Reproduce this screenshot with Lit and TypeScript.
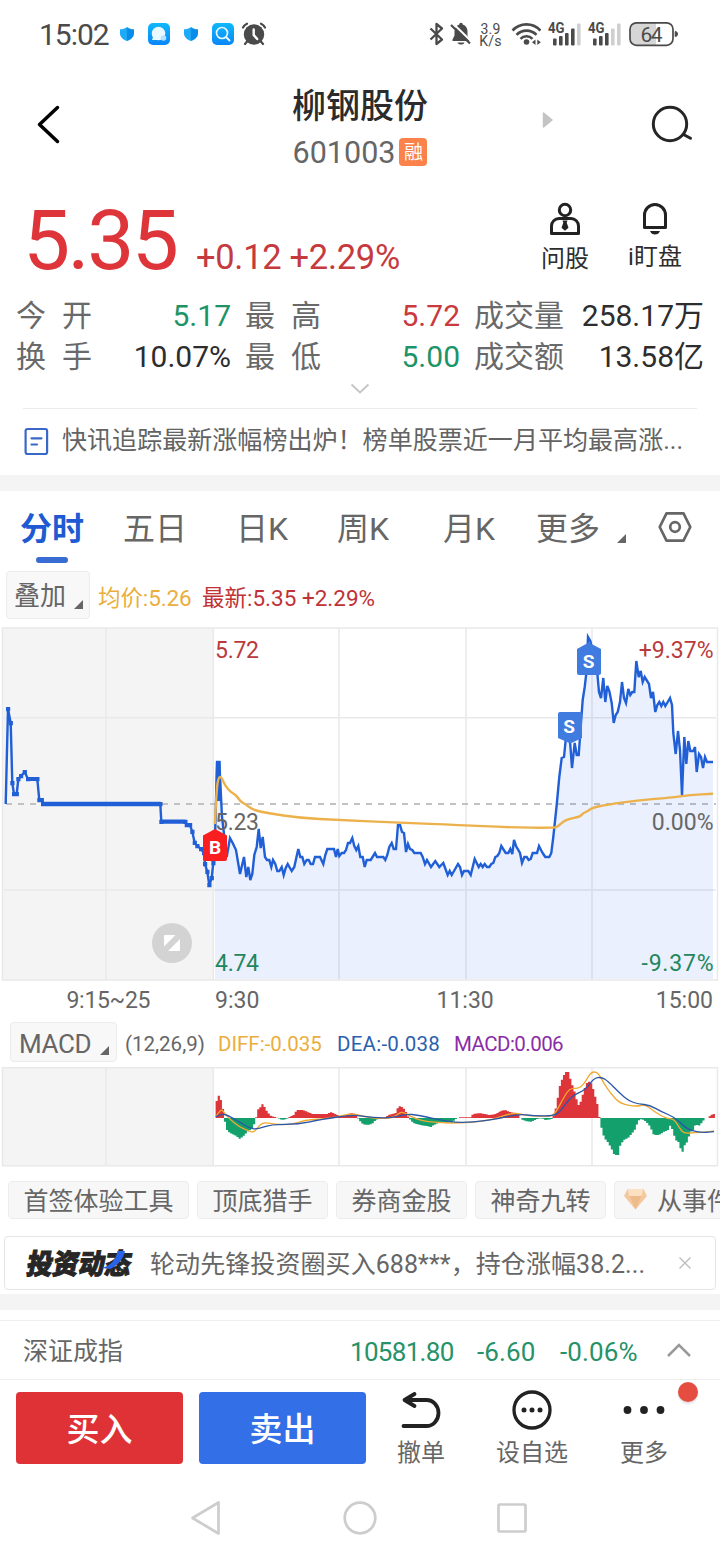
import { LitElement, html, svg, css } from "lit";
import { customElement } from "lit/decorators.js";

type Pt = [number, number];

const line = (pts: Pt[]) => "M" + pts.map((p) => p.join(" ")).join("L");

/** Smooth path through the points, using midpoints as curve ends. */
const smooth = (pts: Pt[]) => {
  let d = `M${pts[0].join(" ")}`;
  for (let i = 1; i < pts.length - 1; i++) {
    const mx = (pts[i][0] + pts[i + 1][0]) / 2;
    const my = (pts[i][1] + pts[i + 1][1]) / 2;
    d += `Q${pts[i].join(" ")} ${mx} ${my}`;
  }
  return d + `L${pts[pts.length - 1].join(" ")}`;
};

/* Call auction, 9:15 to 9:25 */
const AUCTION: Pt[] = [
  [8, 709], [10.7, 723], [12.3, 783], [14, 794], [16.7, 794], [18.3, 779], [21, 776], [24.7, 772], [28, 779],
  [37.3, 779], [39.3, 800], [41.7, 800], [43, 804], [160.3, 804], [161.3, 821.7], [185.3, 821.7], [186.7, 825],
  [190, 825], [192.3, 831.7], [194.7, 842.7], [197.3, 846], [201, 849], [204, 853], [205, 864], [207.3, 871.7],
  [209.3, 885], [211.7, 878], [213.3, 863],
];

/* Continuous trading */
const PRICE: Pt[] = [
  [214.7, 850], [217, 762], [219.3, 762], [222, 817], [226.7, 857], [230, 838], [232.7, 843], [236, 850], [240, 874],
  [244, 857], [246.3, 877], [248.3, 867], [250.3, 880], [252.3, 874], [254.3, 855], [256.7, 847], [258.7, 829],
  [260.7, 848], [262.7, 837], [265, 857], [267, 860], [269.3, 860], [271.3, 867], [273, 860], [275.3, 864],
  [277.3, 871], [279.3, 871], [281.7, 867], [283.7, 875], [285.7, 868], [287.7, 864], [291.7, 871], [294.3, 867],
  [296.7, 856], [298.3, 849], [300.3, 857], [302.3, 857], [304.3, 864], [306.7, 860], [308.7, 860], [310.7, 864],
  [313, 864], [315, 857], [320, 857], [323.3, 864], [325.3, 855], [327.3, 849], [334, 849], [336, 857], [337.7, 849],
  [339.3, 856], [341.7, 853], [344, 853], [346, 850], [348, 843], [350, 843], [352.3, 838], [354.3, 846],
  [356.3, 850], [358.3, 846], [360.3, 857], [362.7, 857], [364.7, 867], [366.7, 860], [370.7, 860], [375, 853],
  [377, 857], [383.3, 857], [385.3, 860], [387.3, 855], [389.3, 847], [391.7, 843], [393.7, 849], [396, 849],
  [398, 825], [400, 825], [402, 832], [404, 833], [406, 852], [408, 844], [410, 849], [412.3, 850], [414.3, 853],
  [420.7, 853], [422.7, 857], [425, 864], [427, 860], [431, 867], [435.3, 861], [439.3, 867], [443.3, 863],
  [447.7, 875], [449.7, 871], [451.7, 875], [454, 871], [458, 864], [460, 867], [462, 875], [464, 871], [468.3, 871],
  [470.7, 875], [472.7, 867], [474.7, 859], [478.7, 867], [480.7, 864], [482.7, 867], [484.7, 864], [487, 867],
  [489.3, 867], [491.3, 864], [493.3, 863], [495.3, 857], [497.3, 856], [499.3, 853], [501.3, 846], [505.7, 853],
  [508.3, 853], [510.3, 849], [512.3, 854], [514, 840], [516, 846], [520, 853], [522, 863], [524.3, 857],
  [526.7, 857], [528.7, 860], [530.7, 859], [532.7, 853], [537, 853], [539, 846], [541, 850], [543.3, 854],
  [545.3, 857], [549.3, 857], [551.3, 853], [553.3, 837], [556.7, 805], [559.3, 777], [561.7, 758], [564, 757],
  [565.7, 740], [568.5, 730], [570.3, 745], [572, 768], [574.7, 743], [576.7, 755], [578.7, 755], [580.7, 727],
  [582.7, 700], [584.7, 687], [586.7, 670], [588, 637], [590.3, 641], [597.3, 673], [599, 692], [601, 698],
  [603.3, 678], [605.3, 702], [607.3, 686], [609.3, 691], [611.7, 703], [613.7, 723], [615.7, 715], [617.7, 712],
  [620, 702], [622, 682], [624, 698], [626, 703], [628.3, 689], [630.3, 695], [632.3, 692], [634.3, 692],
  [636.3, 661], [638.7, 677], [640.7, 671], [642.7, 682], [644.7, 677], [649, 684], [651, 698], [653, 692],
  [655.3, 712], [657.3, 705], [659.3, 702], [661.3, 706], [663.3, 702], [665.3, 706], [667.7, 702], [670, 698],
  [672, 705], [673.3, 733], [675.7, 754], [678, 731], [680, 750], [682, 795], [684.3, 737], [686.3, 764],
  [688.3, 741], [690.3, 751], [693.3, 751], [695, 747], [696.7, 772], [699, 754], [701, 757], [703, 768],
  [705, 757], [707, 762], [713, 762],
];

const AVERAGE: Pt[] = [
  [214.9, 824], [216.5, 789], [218.7, 777], [221.3, 777], [225.3, 786], [230.7, 792], [236, 795], [240, 801],
  [245, 804], [253.3, 810], [266.7, 813], [300, 818], [339, 820], [400, 822.7], [460, 825], [506.7, 827.3],
  [555, 828], [558.3, 826], [563, 821.7], [568.3, 819], [580, 816.7], [583.3, 813], [588.3, 811], [592, 807.7],
  [606.7, 804.7], [640, 800], [670, 797.7], [690, 795], [713, 793.7],
];

/* Histogram outline: x position and signed height */
const HIST: Pt[] = [
  [215.8, 15], [219, 23], [221.8, 15], [223.6, 5], [224.5, 0], [225, -4], [227.3, -13], [231.9, -16], [236.5, -18],
  [239.7, -21], [243.4, -18], [248, -13], [251.6, -11], [254.8, -5], [256.2, 1], [257.1, 8], [259.9, 10],
  [262.2, 14], [264.5, 11], [267.2, 6], [270.9, 2], [274.6, 1], [278, 0], [282.4, -2], [286.5, -1], [289.3, 1],
  [293.9, 3], [296.6, 8], [303, 8], [307.6, 6], [312.2, 4], [327, 4], [330.6, 6], [335.2, 4], [339, 2], [344.4, 2],
  [351.2, 5], [354.5, 4], [357.2, 1], [359, -2], [362.7, -6], [367.3, -7], [372, -6], [375.6, -2], [379, -0.6],
  [385.7, 0.6], [388.4, 3], [392.6, 4], [395.8, 5], [398.5, 12], [402.2, 11], [405, 8], [407.7, 2], [409.6, -1],
  [413.2, -5], [420, -7], [427, -8], [430.7, -9], [434, -7], [438.5, -5], [447.7, -5], [452.3, -4], [456, -1],
  [459, 0.7], [470.6, 0.7], [473, 4], [479.8, 5], [489, 3], [496, 4], [500.5, 7], [505, 8], [509.7, 6],
  [515.2, 5], [518.9, 3], [520.7, -1], [525.7, -3], [530.3, -4], [535, -2], [538, -0.6], [542.7, -0.6],
  [545.5, -2], [551, -1.5], [553.3, 1], [555.6, 9], [557.4, 18], [559.3, 30], [561, 36], [563.4, 42], [565.7, 46],
  [568.5, 46], [570.8, 37], [574, 28], [576.7, 18], [579, 12], [581.3, 18], [584, 28], [586.8, 35], [590, 37],
  [592.3, 32], [595, 22], [597.9, 12], [599.2, 2], [600.6, -6], [602.4, -14], [604.3, -20], [607, -23],
  [610.7, -29], [614.4, -37], [618.5, -37], [620, -28], [623.6, -22], [628.1, -20], [631.3, -16], [634.6, -12],
  [638.2, -3], [640, -1], [642.8, -1.5], [646.5, -4], [649.7, -8], [653.8, -17], [659, -17], [663.5, -14],
  [668, -12], [670.4, -7], [673, -13], [675.4, -22], [678.6, -24], [681, -32], [682.8, -34], [685, -26],
  [687.4, -24], [690, -14], [693.3, -12], [695.6, -6], [698.8, -8], [702.5, -4], [704.8, 0], [707.5, 0],
  [710, 2], [712.6, 4], [714.6, 4],
];

const HIST_STEP = 2.08;
const bars = (positive: boolean) => {
  let d = "";
  let k = 0;
  for (let x = 215.6; x < 713.6; x += HIST_STEP) {
    const c = Math.min(x + HIST_STEP / 2, 714.5);
    while (k < HIST.length - 2 && HIST[k + 1][0] < c) k++;
    const [x0, y0] = HIST[k];
    const [x1, y1] = HIST[k + 1];
    const h = y0 + ((y1 - y0) * Math.max(0, c - x0)) / (x1 - x0);
    if (positive ? h > 0.3 : h < -0.3) {
      d += `M${x.toFixed(2)} 1118V${(1118 - h).toFixed(1)}h2.2V1118z`;
    }
  }
  return d;
};

/* Oscillator lines, on a 1568 x 480 sampling grid */
const DIFF: Pt[] = [
  [470, 305], [481, 281], [488, 292], [500, 312], [520, 335], [540, 347], [553, 353], [565, 330], [577, 322],
  [600, 328], [630, 330], [665, 315], [700, 312], [730, 307], [765, 295], [785, 302], [815, 310], [845, 310],
  [860, 305], [870, 293], [878, 291], [895, 305], [920, 318], [970, 325], [1030, 322], [1075, 313], [1100, 300],
  [1125, 293], [1145, 302], [1195, 305], [1208, 298], [1225, 255], [1240, 219], [1262, 221], [1275, 200],
  [1287, 171], [1302, 171], [1315, 205], [1330, 235], [1350, 266], [1385, 275], [1405, 268], [1425, 290],
  [1450, 310], [1468, 312], [1480, 340], [1490, 356], [1515, 352], [1535, 352], [1555, 348],
];
const DEA: Pt[] = [
  [470, 305], [483, 297], [495, 300], [520, 320], [545, 340], [560, 343], [590, 328], [650, 328], [700, 313],
  [770, 299], [800, 306], [850, 310], [885, 297], [910, 300], [980, 322], [1030, 322], [1090, 310], [1130, 297],
  [1160, 302], [1205, 303], [1220, 290], [1245, 242], [1275, 225], [1293, 190], [1310, 186], [1325, 200],
  [1350, 235], [1370, 258], [1390, 267], [1415, 270], [1440, 290], [1470, 307], [1490, 335], [1505, 347],
  [1530, 353], [1555, 350],
];

const STATS = [
  ["今开", "5.17", "down", "最高", "5.72", "up", "成交量", "258.17万"],
  ["换手", "10.07%", "", "最低", "5.00", "down", "成交额", "13.58亿"],
];

@customElement("status-bar")
class StatusBar extends LitElement {
  static styles = css`
    :host {
      display: flex;
      align-items: center;
      height: 68px;
      padding: 0 42px 0 39px;
      color: #4a4a4a;
      font-family: Roboto, "Noto Sans CJK SC", sans-serif;
    }
    .time {
      width: 77px;
      font-size: 30px;
      line-height: 68px;
      letter-spacing: -1px;
      padding-top: 2px;
    }
    svg { display: block; flex: none; }
    .right { margin-left: auto; display: flex; align-items: center; }
    .speed { display: flex; flex-direction: column; font-size: 14px; line-height: 12px; letter-spacing: 0.200px; text-align: center; width: 25px; margin: 0 8px 0 6px; padding-top: 2px; }
  `;
  signal(lit: number) {
    return svg`${[0, 1, 2, 3, 4].map(
      (i) => svg`<rect x=${5 + i * 6} y=${[16, 13.5, 10.5, 6, 1][i]} width="3.6" height=${[7, 9.5, 12.5, 17, 22][i]} rx="1" fill=${i < lit ? "#4a4a4a" : "#cfcfcf"}/>`
    )}`;
  }
  shield() {
    return svg`<path d="M7 0.5C9 2 11 2.8 14 2.8V7C14 10.500 11 13 7 14.500C3 13 0 10.500 0 7V2.800C3 2.800 5 2 7 .5z" fill="url(#sh)"/>`;
  }
  render() {
    return html`
      <div class="time">15:02</div>
      <svg width="152" height="26" viewBox="116 21 152 26">
        <defs>
          <linearGradient id="sh" x1="0" x2="1"><stop offset=".5" stop-color="#1fa9f7"/><stop offset=".5" stop-color="#078eea"/></linearGradient>
          <linearGradient id="sq" x1="0" y1="0" x2="0" y2="1"><stop stop-color="#10b8fb"/><stop offset="1" stop-color="#0a86f6"/></linearGradient>
        </defs>
        <g transform="translate(120 26.5)">${this.shield()}</g>
        <rect x="148" y="23" width="22" height="22" rx="5" fill="url(#sq)"/>
        <circle cx="158.500" cy="33.500" r="6.800" fill="#eaf8ff"/><path d="M153 37l-1 3h8z" fill="#eaf8ff"/>
        <circle cx="163.500" cy="38" r="2.800" fill="#b4e1ff"/>
        <g transform="translate(184 26.5)">${this.shield()}</g>
        <rect x="212" y="23" width="22" height="22" rx="5" fill="url(#sq)"/>
        <circle cx="222" cy="33" r="5.500" fill="none" stroke="#e6faff" stroke-width="1.700"/>
        <path d="M226 37l3.500 3.500" stroke="#e6faff" stroke-width="1.900" stroke-linecap="round"/>
        <g fill="none" stroke="#4a4a4a" stroke-width="2.200" stroke-linecap="round">
          <circle cx="254" cy="34.500" r="10.200" fill="#4a4a4a" stroke="none"/>
          <path d="M243 27.500a8 8 0 0 1 4-3.800M265 27.500a8 8 0 0 0-4-3.800M247.500 41l-2.500 3M260.500 41l2.500 3"/>
          <path d="M253.700 29.500v5.500l3.500 4" stroke="#fff" stroke-width="2.400"/>
        </g>
      </svg>
      <div class="right">
        <svg width="44" height="26" viewBox="428 21 44 26">
          <path d="M430.500 28.500L442 39.500L436.500 44V24L442 28.500L430.500 39.500" fill="none" stroke="#4a4a4a" stroke-width="2.300" stroke-linejoin="round"/>
          <path d="M461 22.800c1.300 0 1.500.8 1.700 1.600C466 25.500 467.500 28 467.500 31.500v4l2 4v1.500h-17v-1.500l2-4v-4c0-3.500 1.800-6 4.800-7.100.2-.8.400-1.600 1.700-1.600zM457.500 42.500h7c-1 2.700-6 2.700-7 0z" fill="#4a4a4a"/>
          <path d="M452.500 23l20 19.500" stroke="#fff" stroke-width="2"/><path d="M451 25l19 18.500" stroke="#4a4a4a" stroke-width="2.200"/>
        </svg>
        <div class="speed"><span>3.9</span><span>K/s</span></div>
        <svg width="30" height="26" viewBox="511 21 30 26">
          <g fill="none" stroke="#4a4a4a" stroke-width="2.600"><path d="M512.500 30.500a19 19 0 0 1 28 0M516.500 34.800a14 14 0 0 1 20 0M520.500 38.800a8.500 8.500 0 0 1 12 0"/></g>
          <circle cx="526.500" cy="42" r="2.800" fill="#4a4a4a"/>
          <path d="M535.500 39.500v5.500l-3.500-2.700zM537.300 39.500v5.500l3.500-2.700z" fill="#4a4a4a"/>
        </svg>
        <svg width="80" height="26" viewBox="0 -1.500 80 26">
          <text x="7" y="10.800" font-size="14.500" font-weight="700" fill="#4a4a4a" textLength="16.500" lengthAdjust="spacingAndGlyphs">4G</text>
          <g transform="translate(7)">${this.signal(4)}</g>
          <text x="47" y="10.800" font-size="14.500" font-weight="700" fill="#4a4a4a" textLength="16.500" lengthAdjust="spacingAndGlyphs">4G</text>
          <g transform="translate(47)">${this.signal(3)}</g>
        </svg>
        <svg width="57" height="26" viewBox="621 21 57 26">
          <path d="M636 23h20v22h-20a6 6 0 0 1-6-6V29a6 6 0 0 1 6-6z" fill="#d6d6d6"/>
          <rect x="630" y="22.800" width="43" height="22.500" rx="6.500" fill="none" stroke="#4a4a4a" stroke-width="1.700"/>
          <path d="M675.200 31.500q2.300 0 2.300 2.500t-2.300 2.500z" fill="#4a4a4a" stroke="#4a4a4a"/>
          <text x="640.500" y="41.500" font-size="21" fill="#4a4a4a" textLength="22">64</text>
        </svg>
      </div>`;
  }
}

@customElement("stock-header")
class StockHeader extends LitElement {
  static styles = css`
    :host {
      display: grid;
      grid-template-columns: 200px 1fr 200px;
      height: 112px;
      font-family: Roboto, "Noto Sans CJK SC", sans-serif;
    }
    .title { text-align: center; padding-top: 16px; }
    .name { font-size: 34px; line-height: 44px; color: #2b2b2b; font-weight: 500; }
    .code { display: flex; justify-content: center; align-items: center; gap: 4px; height: 49px; padding-top: 0; font-size: 30.500px; color: #666; }
    .tag { width: 28px; height: 28px; border-radius: 4px; background: #fb824a; color: #fff; font-size: 19px; line-height: 30px; text-align: center; margin-top: -2px; }
    svg { display: block; }
  `;
  render() {
    return html`
      <svg width="200" height="112" viewBox="0 68 200 112"><path d="M57.500 107.500L39.500 124.500L57.500 141.500" fill="none" stroke="#000" stroke-width="3.500" stroke-linecap="round" stroke-linejoin="round"/></svg>
      <div class="title">
        <div class="name">柳钢股份</div>
        <div class="code">601003<span class="tag">融</span></div>
      </div>
      <svg width="200" height="112" viewBox="520 68 200 112">
        <path d="M543.500 113v14l8.500-7z" fill="#c4c4c4" stroke="#c4c4c4" stroke-width="1.500" stroke-linejoin="round"/>
        <circle cx="670" cy="124" r="16.700" fill="none" stroke="#262626" stroke-width="3"/>
        <path d="M683.500 134.500l7 3.800" stroke="#262626" stroke-width="3" stroke-linecap="round"/>
      </svg>`;
  }
}

@customElement("quote-panel")
class QuotePanel extends LitElement {
  static styles = css`
    :host { display: block; color: #2d2d2d; font-family: Roboto, "Noto Sans CJK SC", sans-serif; }
    .top { display: flex; height: 115px; }
    .price { color: #dd3539; font-size: 84px; line-height: 121px; letter-spacing: -2.600px; padding-left: 23px; width: 173px; }
    .change { color: #c53a3e; font-size: 34.500px; line-height: 155px; letter-spacing: -0.300px; flex: 1; white-space: nowrap; }
    .tools { display: flex; padding: 21px 32px 0 0; }
    .tool { display: flex; flex-direction: column; align-items: center; width: 90px; font-size: 24px; line-height: 32px; }
    .tool svg { display: block; margin-bottom: 5px; }
    .tool.bell svg { margin-bottom: 3px; }
    .tool.bell { margin-right: -12px; }
    .stats { display: flex; flex-direction: column; padding: 0 16px; font-size: 30px; }
    .row { display: grid; grid-template-columns: 76px 139px 14px 76px 139px 14px 90px 1fr; line-height: 41px; white-space: nowrap; }
    .label { color: #696969; }
    .wide { display: flex; justify-content: space-between; }
    .value { text-align: right; }
    .third { grid-column: 7; }
    .up { color: #c9393d; }
    .down { color: #1d9467; }
    .more { display: flex; justify-content: center; height: 31px; padding-bottom: 5px; margin-bottom: -5px; align-items: center; box-sizing: border-box; height: 36px; margin-top: -5px; padding-top: 3px; margin-bottom: 0; }
    .news { display: flex; align-items: center; height: 66px; margin: 0 23px; border-top: 1px solid #ebebeb; font-size: 25px; line-height: 64px; color: #636363; white-space: nowrap; }
    .news svg { margin: 0 13px 2px 1px; }
    .news span { padding-bottom: 2px; letter-spacing: 0.050px; }
    .gap { height: 16px; background: #f4f4f4; }
  `;
  wide(t: string) {
    return html`<span class="label wide"><span>${t[0]}</span><span>${t[1]}</span></span>`;
  }
  render() {
    return html`
      <div class="top">
        <div class="price">5.35</div>
        <div class="change">+0.12 +2.29%</div>
        <div class="tools">
          <div class="tool">
            <svg width="34" height="37" viewBox="548 201 34 37" fill="none" stroke="#222" stroke-width="3">
              <circle cx="565" cy="210" r="5.700"/>
              <path d="M551.500 233.500V226a7.500 7.500 0 0 1 7.500-7.500h12a7.500 7.500 0 0 1 7.500 7.500v7.500z" stroke-linejoin="round"/>
              <path d="M562.500 220.500h5l-.8 2.300 1.800 5-3.500 3-3.500-3 1.800-5z" fill="#222" stroke="none"/>
            </svg>
            <span>问股</span>
          </div>
          <div class="tool bell">
            <svg width="34" height="37" viewBox="638 201 34 37">
              <path d="M644.500 227.500V215a10.500 10.500 0 0 1 21 0v12.500z" fill="none" stroke="#222" stroke-width="3" stroke-linejoin="round"/>
              <path d="M650 231h10c-1.500 4.800-8.500 4.800-10 0z" fill="#222"/>
            </svg>
            <span>i盯盘</span>
          </div>
        </div>
      </div>
      <div class="stats">
        ${STATS.map(
          (r) => html`<div class="row">
            ${this.wide(r[0])}<span class="value ${r[2]}">${r[1]}</span><i></i>
            ${this.wide(r[3])}<span class="value ${r[5]}">${r[4]}</span>
            <span class="label third">${r[6]}</span><span class="value">${r[7]}</span>
          </div>`
        )}
      </div>
      <div class="more"><svg width="20" height="12" viewBox="0 0 20 12"><path d="M1.500 1.500L10 9.500L18.500 1.500" fill="none" stroke="#c6c6c6" stroke-width="2"/></svg></div>
      <div class="news">
        <svg width="25" height="29" viewBox="24 427 25 29" fill="none" stroke="#3a68c9" stroke-width="2.200" stroke-linecap="round"><rect x="25.600" y="429" width="21.500" height="25" rx="2"/><path d="M31.500 438.300h10M31.500 444.500h5.500"/></svg>
        <span>快讯追踪最新涨幅榜出炉！榜单股票近一月平均最高涨...</span>
      </div>
      <div class="gap"></div>`;
  }
}

@customElement("price-chart")
class PriceChart extends LitElement {
  static styles = css`
    :host { display: block; font-family: Roboto, "Noto Sans CJK SC", sans-serif; color: #666; }
    svg { display: block; }
    .tabs { display: flex; height: 80px; font-size: 32px; line-height: 76px; white-space: nowrap; padding-left: 20px; }
    .tab { width: 113px; }
    .tab.day { width: 101px; }
    .tab.week { width: 106px; }
    .tab.month { width: 93px; }
    .active { color: #205ad3; font-weight: 700; width: 64px; margin-right: 39px; display: flex; flex-direction: column; align-items: center; }
    .active::after { content: ""; width: 32px; height: 6px; border-radius: 3px; background: #396cd2; margin-top: -10px; }
    .caret { border-left: 9px solid transparent; border-bottom: 9px solid #666; height: 0; align-self: flex-end; }
    .tabs .caret { margin: 0 31px 28px 17px; }
    .tabs svg { margin-top: 19px; }
    .legend { display: flex; align-items: center; height: 48px; padding-left: 6px; font-size: 22.500px; line-height: 48px; white-space: nowrap; margin-bottom: 1px; }
    .pick { display: flex; box-sizing: border-box; height: 48px; width: 84px; border: 1px solid #ececec; border-radius: 4px; background: #f8f8f8; font-size: 26px; line-height: 48px; padding-left: 7px; margin-right: 8px; }
    .pick .caret { margin: 0 0 9px 8px; }
    .avg { color: #eaae3c; width: 104px; padding-top: 6px; letter-spacing: -0.100px; }
    .last { color: #bf3236; padding-top: 6px; }
    .macdbar { display: flex; align-items: center; height: 40px; padding-left: 10px; font-size: 20.500px; white-space: nowrap; }
    .macdbar .pick { width: 107px; height: 40px; line-height: 42px; padding-left: 8px; margin-right: 8px; letter-spacing: -0.400px; }
    .macdbar .pick .caret { margin: 0 0 6px 9px; }
    .macdbar span { flex: none; padding-top: 3px; }
    .params { width: 93px; }
    .diff { width: 119px; color: #eaae3c; }
    .dea { width: 117px; color: #2b5fae; letter-spacing: 0.250px; }
    .macd { color: #8a2ca6; letter-spacing: -0.550px; }
    .label { font-size: 23px; fill: #666; }
    .label.up { fill: #b93a3d; }
    .label.down { fill: #22865f; }
    .mark { font-size: 19px; font-weight: 700; fill: #fff; }
    .stroke { fill: none; stroke: #205fd6; stroke-width: 2.400; }
    .avgline { fill: none; stroke: #ecb14a; stroke-width: 2.400; }
    .thin { fill: none; stroke-width: 1.300; }
  `;
  render() {
    const dots = AUCTION.map(([x, y]) => `M${x - 2} ${y - 2}h4.200v4.200h-4.200z`).join("");
    return html`
      <div class="tabs">
        <span class="active">分时</span><span class="tab">五日</span><span class="tab day">日K</span><span class="tab week">周K</span><span class="tab month">月K</span><span>更多</span>
        <i class="caret"></i>
        <svg width="36" height="34" viewBox="-18 -17 36 34" fill="none" stroke="#666" stroke-width="2.700" stroke-linejoin="round"><path d="M-8.500-13.700h17L15.300 0 8.500 13.700h-17L-15.300 0z"/><circle r="4.800"/></svg>
      </div>
      <div class="legend">
        <div class="pick">叠加<i class="caret"></i></div>
        <span class="avg">均价:5.26</span><span class="last">最新:5.35 +2.29%</span>
      </div>
      <svg width="720" height="402" viewBox="0 620 720 402">
        <rect x="2.500" y="628" width="211" height="352" fill="#f4f4f4"/>
        <g stroke="#e9e9e9" stroke-width="1.500" fill="none">
          <path d="M2.500 628H717.500V980H2.500zM4 717.800H716M4 890H716M106 628V980M213.300 628V980M339 628V980M466 628V980M592 628V980"/>
        </g>
        <path d="M6 804H716" stroke="#c2c2c2" stroke-width="1.800" stroke-dasharray="6 6"/>
        <path d="${line(PRICE)}V979H215z" fill="#2e6bfa" fill-opacity=".1"/>
        <path class="stroke" d="M5.700 804L${line(AUCTION).slice(1)}"/>
        <path d="${dots}M43 801.800H160.500V806.200H43zM161.300 819.600h24v4.200h-24zM28 777h9v4h-9z" fill="#205fd6"/>
        <path class="stroke" d=${line(PRICE)}/>
        <path d="M216 761h4.500l1 40h-6z" fill="#205fd6"/>
        <path class="avgline" d=${smooth(AVERAGE)}/>
        <text class="label up" x="215" y="658" textLength="44">5.72</text>
        <text class="label" x="215" y="829.800" textLength="44">5.23</text>
        <text class="label down" x="215" y="971" textLength="44">4.74</text>
        <text class="label up" x="713.500" y="658" text-anchor="end">+9.37%</text>
        <text class="label" x="713.500" y="829.800" text-anchor="end">0.00%</text>
        <text class="label down" x="713.500" y="971" text-anchor="end" textLength="72">-9.37%</text>
        <text class="label" x="66.500" y="1008" textLength="84">9:15~25</text>
        <text class="label" x="215" y="1008">9:30</text>
        <text class="label" x="436.500" y="1008">11:30</text>
        <text class="label" x="713" y="1008" text-anchor="end">15:00</text>
        <path d="M203 835.500l12-6.500 12 6.500v23.500q0 2-2 2h-20q-2 0-2-2z" fill="#f91f20"/>
        <text class="mark" x="215" y="854" text-anchor="middle">B</text>
        <path d="M577 649l11.800-6.500 12.200 6.500v24q0 2-2 2h-20q-2 0-2-2z" fill="#407be0"/>
        <text class="mark" x="588.500" y="668" text-anchor="middle">S</text>
        <path d="M558 714q0-2 2-2h20q2 0 2 2v24l-11.500 5.500-12.500-5.500z" fill="#407be0"/>
        <text class="mark" x="569" y="732.500" text-anchor="middle">S</text>
        <circle cx="172" cy="943" r="20" fill="#d3d3d3"/>
        <path d="M165 935h10.500L164 946.500V936q0-1 1-1zM180 939v11q0 1-1 1h-11z" fill="#fff"/>
      </svg>
      <div class="macdbar">
        <div class="pick">MACD<i class="caret"></i></div>
        <span class="params">(12,26,9)</span><span class="diff">DIFF:-0.035</span><span class="dea">DEA:-0.038</span><span class="macd">MACD:0.006</span>
      </div>
      <svg width="720" height="108" viewBox="0 1062 720 108">
        <rect x="2.500" y="1068" width="211" height="97.500" fill="#f4f4f4"/>
        <path d="M2.500 1067.800H717.500V1165.700H2.500zM106 1068V1165M213.300 1068V1165M339 1068V1165M466 1068V1165M592 1068V1165" stroke="#e9e9e9" stroke-width="1.500" fill="none"/>
        <path d=${bars(true)} fill="#dd3539"/>
        <path d=${bars(false)} fill="#14a06d"/>
        <g transform="translate(0 1015) scale(.45918 .33333)">
          <path class="thin" d=${smooth(DIFF)} stroke="#f0a92f" vector-effect="non-scaling-stroke"/>
          <path class="thin" d=${smooth(DEA)} stroke="#2a57a8" vector-effect="non-scaling-stroke"/>
        </g>
      </svg>`;
  }
}

@customElement("tool-strip")
class ToolStrip extends LitElement {
  static styles = css`
    :host { display: block; font-family: Roboto, "Noto Sans CJK SC", sans-serif; color: #666; }
    svg { display: block; flex: none; }
    .chips { display: flex; gap: 8px; padding: 11px 0 0 8px; overflow: hidden; font-size: 25px; }
    .chip { flex: none; box-sizing: border-box; height: 38px; width: 131px; display: flex; justify-content: center; align-items: center; line-height: 36px; padding-top: 3px; background: #f7f7f7; border: 1px solid #ededed; border-radius: 4px; white-space: nowrap; }
    .chip.long { width: 181px; }
    .chip svg { margin-right: 9px; margin-bottom: 6px; }
    .chip.gem { width: 190px; justify-content: flex-start; padding-left: 8px; }
    .feed { display: flex; align-items: center; box-sizing: border-box; height: 54px; margin: 17px 4px 4px; border: 1.500px solid #e5e5e5; border-radius: 4px; font-size: 25px; white-space: nowrap; padding-left: 18px; }
    .feed span { line-height: 50px; width: 528px; padding-top: 4px; letter-spacing: 0.080px; margin-left: -1px; }
    .gap { height: 16px; background: #f4f4f4; }
    .index { display: flex; align-items: center; box-sizing: border-box; height: 60px; margin-top: 10px; border: 1px solid #eee; border-width: 1px 0; padding-left: 23px; font-size: 25px; line-height: 60px; white-space: nowrap; }
    .index span { padding-top: 4px; }
    .index .num { color: #279268; font-size: 26px; letter-spacing: -0.700px; padding-top: 3px; }
    .name { width: 327px; }
    .a { width: 127px; }
    .b { width: 83px; }
    .c { width: 106px; }
    .index .b, .index .c { letter-spacing: 0.100px; }
    .logo { font-size: 28px; font-weight: 900; fill: #262626; stroke: #262626; stroke-width: 1; }
  `;
  render() {
    return html`
      <div class="chips">
        <div class="chip long">首签体验工具</div>
        <div class="chip">顶底猎手</div>
        <div class="chip">券商金股</div>
        <div class="chip">神奇九转</div>
        <div class="chip gem">
          <svg width="25" height="22" viewBox="0 0 25 22"><path d="M4.500 1h16L24 8 12.500 21.500 1 8z" fill="#f3c99f"/><path d="M4.500 1h16L18.500 8h-12z" fill="#fbe0c2"/><path d="M6.500 8h12l-6 13.500z" fill="#eebb8b"/></svg>
          从事件
        </div>
      </div>
      <div class="feed">
        <svg width="128" height="36" viewBox="0 0 128 36">
          <text class="logo" transform="translate(2.5 29) skewX(-10)" textLength="104" lengthAdjust="spacingAndGlyphs">投资动态</text>
          <path d="M79 23c8-2 14-8 15.500-17h7.500c-2 9-8 15-15 18z" fill="#2963e8"/>
        </svg>
        <span>轮动先锋投资圈买入688***，持仓涨幅38.2...</span>
        <svg width="14" height="14" viewBox="0 0 14 14"><path d="M1.500 1.500l11 11M12.500 1.500l-11 11" stroke="#bdbdbd" stroke-width="1.400"/></svg>
      </div>
      <div class="gap"></div>
      <div class="index">
        <span class="name">深证成指</span><span class="num a">10581.80</span><span class="num b">-6.60</span><span class="num c">-0.06%</span>
        <svg width="26" height="16" viewBox="0 0 26 16"><path d="M2 14L13 3L24 14" fill="none" stroke="#999" stroke-width="2.500"/></svg>
      </div>`;
  }
}

@customElement("trade-bar")
class TradeBar extends LitElement {
  static styles = css`
    :host { display: block; font-family: Roboto, "Noto Sans CJK SC", sans-serif; }
    svg { display: block; }
    .bar { display: flex; height: 96px; }
    .btn { width: 167px; height: 72px; margin: 12px 0 0 16px; border-radius: 4px; color: #fff; font-size: 33px; font-weight: 500; line-height: 76px; text-align: center; }
    .buy { background: #df3237; }
    .sell { background: #336fe6; }
    .act { position: relative; width: 112px; display: flex; flex-direction: column; align-items: center; font-size: 24px; line-height: 33px; color: #666; padding-top: 7px; }
    .act.undo { width: 110px; }
    .dot { position: absolute; top: 2px; right: 2px; width: 20px; height: 20px; border-radius: 50%; background: #e64d41; box-shadow: 0 2px 2px rgba(0, 0, 0, .12); }
    .sys { display: flex; height: 84px; justify-content: center; align-items: center; }
  `;
  render() {
    return html`
      <div class="bar">
        <div class="btn buy">买入</div>
        <div class="btn sell">卖出</div>
        <div class="act undo">
          <svg width="46" height="50" viewBox="399 1387 46 50" fill="none" stroke="#222" stroke-width="3.800" stroke-linecap="round" stroke-linejoin="round"><path d="M415.500 1394L405.500 1400L415.500 1406M406 1400H427.500a12 13 0 0 1 0 26H404.500"/></svg>
          撤单
        </div>
        <div class="act">
          <svg width="46" height="50" viewBox="-23 -23 46 50"><circle r="18" fill="none" stroke="#222" stroke-width="3.300"/><g fill="#222"><circle cx="-8" r="2.500"/><circle r="2.500"/><circle cx="8" r="2.500"/></g></svg>
          设自选
        </div>
        <div class="act">
          <svg width="46" height="50" viewBox="-23 -23 46 50" fill="#222"><circle cx="-16.500" r="3.900"/><circle r="3.900"/><circle cx="16.500" r="3.900"/></svg>
          更多
          <i class="dot"></i>
        </div>
      </div>
      <div class="sys">
        <svg width="400" height="50" viewBox="160 1493 400 50" fill="none" stroke="#cdcdcd" stroke-width="2.700" stroke-linejoin="round">
          <path d="M192.500 1518L218.500 1502.500V1533.500z"/><circle cx="360" cy="1518" r="15.300"/><rect x="498.500" y="1504.500" width="27" height="27" rx="1"/>
        </svg>
      </div>`;
  }
}

@customElement("app-root")
class AppRoot extends LitElement {
  static styles = css`
    :host { display: block; width: 720px; height: 1560px; overflow: hidden; background: #fff; }
  `;
  render() {
    return html`<status-bar></status-bar><stock-header></stock-header><quote-panel></quote-panel><price-chart></price-chart><tool-strip></tool-strip><trade-bar></trade-bar>`;
  }
}
